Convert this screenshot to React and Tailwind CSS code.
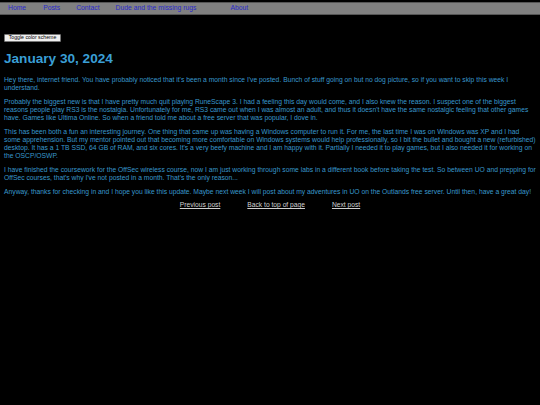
import React from "react";

// line breaks kept as in the published page
const paragraphs = [
  [
    "Hey there, internet friend. You have probably noticed that it's been a month since I've posted. Bunch of stuff going on but no dog picture, so if you want to skip this week I",
    "understand.",
  ],
  [
    "Probably the biggest new is that I have pretty much quit playing RuneScape 3. I had a feeling this day would come, and I also knew the reason. I suspect one of the biggest",
    "reasons people play RS3 is the nostalgia. Unfortunately for me, RS3 came out when I was almost an adult, and thus it doesn't have the same nostalgic feeling that other games",
    "have. Games like Ultima Online. So when a friend told me about a free server that was popular, I dove in.",
  ],
  [
    "This has been both a fun an interesting journey. One thing that came up was having a Windows computer to run it. For me, the last time I was on Windows was XP and I had",
    "some apprehension. But my mentor pointed out that becoming more comfortable on Windows systems would help professionally, so I bit the bullet and bought a new (refurbished)",
    "desktop. It has a 1 TB SSD, 64 GB of RAM, and six cores. It's a very beefy machine and I am happy with it. Partially I needed it to play games, but I also needed it for working on",
    "the OSCP/OSWP.",
  ],
  [
    "I have finished the coursework for the OffSec wireless course, now I am just working through some labs in a different book before taking the test. So between UO and prepping for",
    "OffSec courses, that's why I've not posted in a month. That's the only reason...",
  ],
  [
    "Anyway, thanks for checking in and I hope you like this update. Maybe next week I will post about my adventures in UO on the Outlands free server. Until then, have a great day!",
  ],
];

export default function App() {
  return (
    <div className="w-[540px] h-[405px] bg-black overflow-hidden font-['Liberation_Sans',Arial,sans-serif]">
      {/* nav bar */}
      <nav className="mt-[2px] h-[13px] bg-[#808080] border-y border-[#555] flex items-center text-[6.8px] text-[#2a2acc]">
        <a className="ml-[8px]">Home</a>
        <a className="ml-[17px]">Posts</a>
        <a className="ml-[16px]">Contact</a>
        <a className="ml-[16px]">Dude and the missing rugs</a>
        <a className="ml-[34px]">About</a>
      </nav>

      <main className="px-[4px]">
        <button className="mt-[19px] h-[8px] w-[57px] bg-[#efefef] border border-[#767676] text-[5.2px] leading-none text-black rounded-[1px] flex items-center justify-center">
          Toggle color scheme
        </button>

        <h1 className="mt-[9px] text-[13.6px] leading-[16px] font-bold text-[#3a9fd6]">January 30, 2024</h1>

        <div className="mt-[9px] text-[6.75px] leading-[8px] text-[#3898cc]">
          {paragraphs.map((lines, i) => (
            <p key={i} className="mb-[6px]">
              {lines.map((l, j) => (
                <span key={j} className="block whitespace-nowrap">{l}</span>
              ))}
            </p>
          ))}
        </div>

        <div className="-mt-[1px] flex justify-center gap-[27px] text-[6.7px] leading-[8px] text-[#d0d0d0]">
          <a className="underline">Previous post</a>
          <a className="underline">Back to top of page</a>
          <a className="underline">Next post</a>
        </div>
      </main>
    </div>
  );
}
